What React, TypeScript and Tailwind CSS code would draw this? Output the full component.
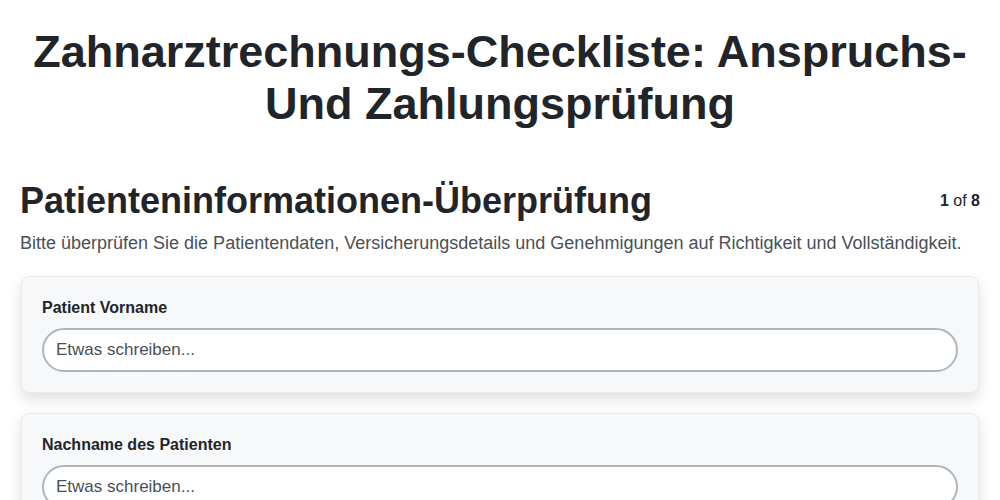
import React from 'react';

const fields = ['Patient Vorname', 'Nachname des Patienten', 'Geburtsdatum des Patienten'];

export default function App() {
    return (
        <div className="min-h-screen bg-white px-5 text-[#212529]" style={{ fontFamily: '"Liberation Sans", Arial, sans-serif' }}>
            <h1 className="pt-[26px] text-center text-[45px] font-bold leading-[52px]">
                Zahnarztrechnungs-Checkliste: Anspruchs-Und Zahlungsprüfung
            </h1>
            <div className="mt-[51px] flex items-start justify-between">
                <h2 className="text-4xl font-bold leading-10">Patienteninformationen-Überprüfung</h2>
                <div className="pt-2 text-base">
                    <span className="font-bold">1</span> of <span className="font-bold">8</span>
                </div>
            </div>
            <p className="mt-2 text-lg leading-7 text-[#495057]">
                Bitte überprüfen Sie die Patientendaten, Versicherungsdetails und Genehmigungen auf Richtigkeit und Vollständigkeit.
            </p>
            <div className="mx-px mt-[19px] flex flex-col gap-5">
                {fields.map((label) => (
                    <div
                        key={label}
                        className="rounded-lg border border-[#e9ecef] bg-[#f7f8fa] px-5 pt-[19px] pb-5 shadow-[0_6px_14px_rgba(0,0,0,0.13)]"
                    >
                        <label className="mb-2 block text-base font-bold leading-6">{label}</label>
                        <input
                            type="text"
                            placeholder="Etwas schreiben..."
                            className="block h-11 w-full rounded-full border-2 border-[#adb5bd] bg-white px-3 text-[17px] outline-none placeholder:text-[#495057]"
                        />
                    </div>
                ))}
            </div>
        </div>
    );
}
